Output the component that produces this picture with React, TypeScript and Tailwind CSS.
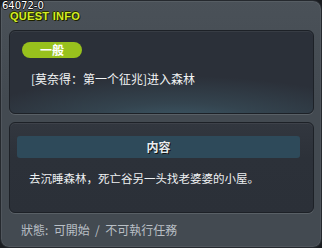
import React from "react";

export default function App() {
  return (
    <div className="w-[322px] h-[248px] bg-[#1a1d21]">
      <div className="relative w-[322px] h-[248px] rounded-[9px] border border-[#25292e] bg-[linear-gradient(180deg,#4a5158_0%,#434a51_40%,#434a51_100%)] shadow-[inset_0_0_0_1px_rgba(255,255,255,0.07)] flex flex-col">
        <div className="absolute left-[1px] top-0 text-[10px] leading-[9px] text-white font-['DejaVu_Sans',sans-serif] [text-shadow:1px_0_#111,-1px_0_#111,0_1px_#111,0_-1px_#111]">
          64072-0
        </div>
        <div className="pl-[9px] pt-[9px] h-[29px] text-[11px] leading-[12px] font-bold text-[#d4ee23] tracking-[0.3px] font-['Liberation_Sans',sans-serif] [text-shadow:1px_1px_#1c2000,-1px_0_#2a3000,0_-1px_#2a3000]">
          QUEST INFO
        </div>
        <div className="ml-[8px] w-[305px] h-[84px] rounded-[6px] border border-[#1d2127] shadow-[0_1px_0_rgba(255,255,255,0.12),inset_0_1px_0_rgba(255,255,255,0.06)] bg-[radial-gradient(ellipse_70%_60%_at_55%_115%,#3f5d6c_0%,#34444f_45%,#2b3039_100%)] pl-[12px] pt-[11px] flex flex-col">
          <div className="w-[60px] h-[16px] rounded-full bg-[#98c11d] flex items-center justify-center text-[12px] leading-none font-bold text-white font-['Noto_Sans_CJK_SC',sans-serif]">
            一般
          </div>
          <div className="mt-[14px] pl-[9px] text-[12px] leading-[14px] text-[#f2f4f5] font-['Noto_Sans_CJK_SC',sans-serif]">
            [莫奈得：第一个征兆]进入森林
          </div>
        </div>
        <div className="ml-[8px] mt-[8px] w-[305px] h-[91px] rounded-[6px] border border-[#1d2127] shadow-[0_1px_0_rgba(255,255,255,0.12),inset_0_1px_0_rgba(255,255,255,0.06)] bg-[linear-gradient(180deg,#32373f_0%,#2c3139_40%,#2b3038_100%)] pl-[7px] pr-[13px] pt-[13px] flex flex-col">
          <div className="h-[22px] rounded-[3px] bg-[#2e4a5a] flex items-center justify-center text-[12px] font-bold text-[#e6ecef] font-['Noto_Sans_CJK_SC',sans-serif] [text-shadow:1px_1px_#111]">
            内容
          </div>
          <div className="mt-[13px] pl-[12px] text-[11.5px] leading-[14px] text-[#eef0f2] whitespace-nowrap font-['Noto_Sans_CJK_SC',sans-serif]">
            去沉睡森林，死亡谷另一头找老婆婆的小屋。
          </div>
        </div>
        <div className="pl-[20px] mt-[10px] text-[12px] leading-[14px] text-[#b9bfc5] whitespace-pre font-['Noto_Sans_CJK_TC',sans-serif]">
          {"狀態:  可開始  /  不可執行任務"}
        </div>
      </div>
    </div>
  );
}
